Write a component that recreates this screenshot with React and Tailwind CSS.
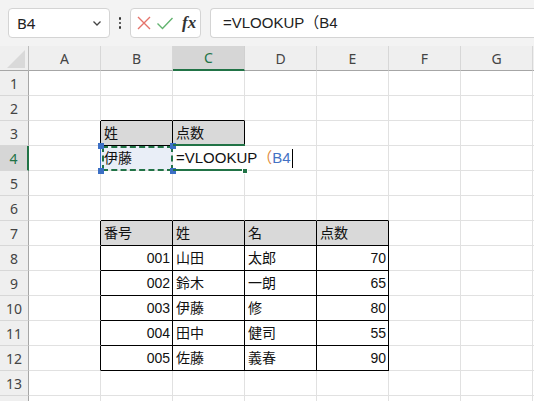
import React from "react";

const COLS = ["A", "B", "C", "D", "E", "F", "G", "H"];
const ROWS = [1, 2, 3, 4, 5, 6, 7, 8, 9, 10, 11, 12, 13, 14];

const cells = {
  B3: { t: "姓", head: true },
  C3: { t: "点数", head: true },
  B4: { t: "伊藤" },
  B7: { t: "番号", head: true },
  C7: { t: "姓", head: true },
  D7: { t: "名", head: true },
  E7: { t: "点数", head: true },
  B8: { t: "001", right: true }, C8: { t: "山田" }, D8: { t: "太郎" }, E8: { t: "70", right: true },
  B9: { t: "002", right: true }, C9: { t: "鈴木" }, D9: { t: "一朗" }, E9: { t: "65", right: true },
  B10: { t: "003", right: true }, C10: { t: "伊藤" }, D10: { t: "修" }, E10: { t: "80", right: true },
  B11: { t: "004", right: true }, C11: { t: "田中" }, D11: { t: "健司" }, E11: { t: "55", right: true },
  B12: { t: "005", right: true }, C12: { t: "佐藤" }, D12: { t: "義春" }, E12: { t: "90", right: true },
};

// ranges drawn with thin black borders
const inTable = (r, c) =>
  (r === 3 && c >= 1 && c <= 2) || (r >= 7 && r <= 12 && c >= 1 && c <= 4);

const cellFont = { fontFamily: '"Liberation Sans", "Noto Sans CJK JP", sans-serif' };
const uiFont = { fontFamily: '"Noto Sans", "Liberation Sans", sans-serif' };

function Toolbar() {
  return (
    <div className="flex h-[46px] items-start bg-[#f3f3f3] pt-[8px] pl-[8px]">
      <div className="flex h-[30px] w-[102px] items-center justify-between rounded-[4px] border border-[#d4d4d4] bg-white pl-[8px] pr-[6px]">
        <span className="text-[15px] text-[#222]" style={uiFont}>B4</span>
        <svg width="12" height="12" viewBox="0 0 12 12" fill="none" stroke="#444" strokeWidth="1.3">
          <path d="M2.5 4.5 L6 8 L9.5 4.5" />
        </svg>
      </div>
      <div className="flex h-[30px] w-[20px] flex-col items-center justify-center gap-[2px]">
        <span className="h-[2.5px] w-[2.5px] rounded-full bg-[#333]" />
        <span className="h-[2.5px] w-[2.5px] rounded-full bg-[#333]" />
        <span className="h-[2.5px] w-[2.5px] rounded-full bg-[#333]" />
      </div>
      <div className="flex h-[30px] w-[71px] items-center rounded-[4px] border border-[#d4d4d4] bg-white pl-[5px]">
        <svg width="16" height="16" viewBox="0 0 16 16" fill="none" stroke="#e5736b" strokeWidth="1.4">
          <path d="M2 2 L14 14 M14 2 L2 14" />
        </svg>
        <svg className="ml-[4px]" width="18" height="16" viewBox="0 0 18 16" fill="none" stroke="#62b36f" strokeWidth="1.4">
          <path d="M1.5 8.5 L6.5 13.5 L16.5 3" />
        </svg>
        <span
          className="ml-[8px] text-[17px] italic text-[#333]"
          style={{ fontFamily: '"Liberation Serif", "DejaVu Serif", serif', fontWeight: 600 }}
        >
          fx
        </span>
      </div>
      <div className="ml-[9px] flex h-[30px] flex-1 items-center rounded-l-[4px] border border-r-0 border-[#d4d4d4] bg-white pl-[12px]">
        <span className="text-[15px] text-[#222]" style={cellFont}>=VLOOKUP（B4</span>
      </div>
    </div>
  );
}

function CornerCell() {
  return (
    <div className="relative h-[25px] border-r border-b border-r-[#bdbdbd] border-b-[#a6a6a6] bg-[#efefef]">
      <svg className="absolute left-[7px] top-[4px]" width="18" height="18" viewBox="0 0 18 18">
        <polygon points="18,0 18,18 0,18" fill="#d9d9d9" />
      </svg>
    </div>
  );
}

function ColHeader({ col }) {
  const active = col === "C";
  return (
    <div
      className={
        active
          ? "flex h-[25px] items-center justify-center border-r border-b-2 border-r-[#d0d0d0] border-b-[#217346] bg-[#d6d6d6] text-[14px] text-[#217346]"
          : "flex h-[25px] items-center justify-center border-r border-b border-r-[#d7d7d7] border-b-[#a6a6a6] bg-[#efefef] text-[14px] text-[#444]"
      }
      style={uiFont}
    >
      {col !== "H" && col}
    </div>
  );
}

function RowHeader({ row }) {
  const active = row === 4;
  return (
    <div
      className={
        active
          ? "flex h-[25px] items-center justify-center border-r-2 border-b border-r-[#217346] border-b-[#d7d7d7] bg-[#d6d6d6] text-[14px] text-[#217346]"
          : "flex h-[25px] items-center justify-center border-r border-b border-r-[#a6a6a6] border-b-[#d7d7d7] bg-[#efefef] text-[14px] text-[#444]"
      }
      style={uiFont}
    >
      {row < 14 && row}
    </div>
  );
}

function Cell({ r, c }) {
  const id = COLS[c] + r;
  const data = cells[id];
  const rightBlack = inTable(r, c) || inTable(r, c + 1);
  const bottomBlack = inTable(r, c) || inTable(r + 1, c);
  const isFormula = id === "C4";
  const cls = [
    "relative flex h-[25px] items-center border-r border-b text-[14px] text-[#111]",
    isFormula ? "border-r-transparent" : rightBlack ? "border-r-black" : "border-r-[#e1e1e1]",
    bottomBlack ? "border-b-black" : "border-b-[#e1e1e1]",
    data && data.head ? "bg-[#d9d9d9]" : id === "B4" ? "bg-[#e9eef7]" : "bg-white",
    data && data.right ? "justify-end pr-[2px]" : "pl-[3px]",
  ].join(" ");

  return (
    <div className={cls} style={cellFont}>
      {data && <span>{data.t}</span>}
      {isFormula && (
        <span className="absolute left-[3px] top-0 z-20 flex h-[25px] items-center whitespace-nowrap text-[15px]">
          =VLOOKUP<span className="text-[#e08a3c]">（</span>
          <span className="text-[#4472c4]">B4</span>
          <span className="ml-[1px] h-[19px] w-[1px] bg-black" />
        </span>
      )}
    </div>
  );
}

function Sheet() {
  return (
    <div className="relative">
      <div className="grid grid-cols-[29px_repeat(8,72px)]">
        <CornerCell />
        {COLS.map((c) => (
          <ColHeader key={c} col={c} />
        ))}
        {ROWS.map((r) => (
          <React.Fragment key={r}>
            <RowHeader row={r} />
            {COLS.map((_, c) => (
              <Cell key={c} r={r} c={c} />
            ))}
          </React.Fragment>
        ))}
      </div>

      {/* referenced range B4: dashed outline with corner handles */}
      <div className="pointer-events-none absolute left-[100px] top-[100px] z-10 h-[25px] w-[73px] border-l border-[#3b6fc5]">
        <div className="absolute inset-[0px] left-[1px] border-[2px] border-dashed border-[#217346]" />
        <span className="absolute left-[-3px] top-[-3px] h-[6px] w-[6px] bg-[#3b6fc5]" />
        <span className="absolute right-[-3px] top-[-3px] h-[6px] w-[6px] bg-[#3b6fc5]" />
        <span className="absolute left-[-3px] bottom-[-3px] h-[6px] w-[6px] bg-[#3b6fc5]" />
        <span className="absolute right-[-3px] bottom-[-3px] h-[6px] w-[6px] bg-[#3b6fc5]" />
      </div>

      {/* active cell C4 */}
      <div className="pointer-events-none absolute left-[173px] top-[98px] z-10 h-[2px] w-[72px] bg-[#217346]" />
      <div className="pointer-events-none absolute left-[173px] top-[123px] z-10 h-[2px] w-[70px] bg-[#217346]" />
      <div className="pointer-events-none absolute left-[242px] top-[122px] z-10 h-[6px] w-[6px] border border-white bg-[#217346]" />
    </div>
  );
}

export default function App() {
  return (
    <div className="h-[401px] w-[534px] overflow-hidden bg-white">
      <Toolbar />
      <Sheet />
    </div>
  );
}
